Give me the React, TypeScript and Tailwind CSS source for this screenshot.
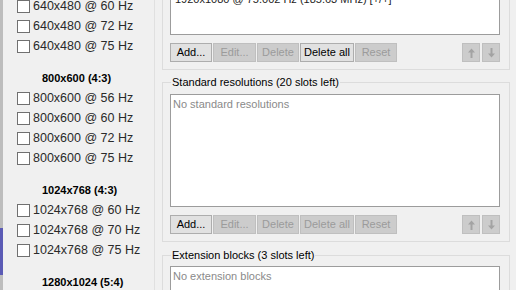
const modes = [
  { title: null, items: ["640x480 @ 60 Hz", "640x480 @ 72 Hz", "640x480 @ 75 Hz"] },
  { title: "800x600 (4:3)", items: ["800x600 @ 56 Hz", "800x600 @ 60 Hz", "800x600 @ 72 Hz", "800x600 @ 75 Hz"] },
  { title: "1024x768 (4:3)", items: ["1024x768 @ 60 Hz", "1024x768 @ 70 Hz", "1024x768 @ 75 Hz"] },
  { title: "1280x1024 (5:4)", items: [] },
]

function Btn({ label, enabled, w }: { label: string; enabled?: boolean; w: string }) {
  return (
    <div
      className={`${w} h-[19px] border flex items-center justify-center text-[11px] leading-none ${
        enabled ? "bg-[#e1e1e1] border-[#adadad] text-black" : "bg-[#cccccc] border-[#bfbfbf] text-[#9b9b9b]"
      }`}
    >
      {label}
    </div>
  )
}

function Arrow({ up }: { up?: boolean }) {
  return (
    <div className="w-[18px] h-[19px] border bg-[#cccccc] border-[#bfbfbf] flex items-center justify-center">
      <svg width="7" height="10" viewBox="0 0 7 10" className={up ? "" : "rotate-180"}>
        <path d="M3.5 0.5 L7 4.5 L4.5 4.5 L4.5 10 L2.5 10 L2.5 4.5 L0 4.5 Z" fill="#a3a3a3" />
      </svg>
    </div>
  )
}

function ButtonRow({ hasItems }: { hasItems?: boolean }) {
  return (
    <div className="flex items-center gap-[1px] mt-[8px]">
      <Btn label="Add..." enabled w="w-[42px]" />
      <Btn label="Edit..." w="w-[43px]" />
      <Btn label="Delete" w="w-[42px]" />
      <Btn label="Delete all" enabled={hasItems} w="w-[54px]" />
      <Btn label="Reset" w="w-[42px]" />
      <div className="ml-auto flex gap-[2px]">
        <Arrow up />
        <Arrow />
      </div>
    </div>
  )
}

function GroupBox({ title, children, className }: { title: string; children: React.ReactNode; className?: string }) {
  return (
    <div className={`relative border border-[#dcdcdc] pl-[7px] pr-[9px] ${className ?? ""}`}>
      <span className="absolute -top-[8px] left-[8px] bg-[#f0f0f0] px-[1px] text-[11px] leading-[14px] text-black whitespace-nowrap">
        {title}
      </span>
      {children}
    </div>
  )
}

export default function App() {
  return (
    <div className="w-[516px] h-[290px] overflow-hidden bg-[#f0f0f0] flex" style={{ fontFamily: '"Liberation Sans", Arial, sans-serif' }}>
      <div className="w-[3px] flex flex-col">
        <div className="h-[228px] bg-[#bdbdbd]" />
        <div className="h-[47px] bg-[#5b5bb5]" />
        <div className="flex-1 bg-[#bdbdbd]" />
      </div>

      <div className="w-[152px] border-r border-[#e0e0e0] overflow-hidden">
        <div className="-mt-[4px]">
          {modes.map((g, i) => (
            <div key={i}>
              {g.title && (
                <div className="mt-[12px] h-[20px] flex items-center pl-[39px] text-[11px] font-bold text-black whitespace-nowrap">
                  {g.title}
                </div>
              )}
              {g.items.map((m) => (
                <div key={m} className="h-[20px] flex items-center pl-[14px] whitespace-nowrap">
                  <div className="w-[13px] h-[13px] border border-[#707070] bg-white shrink-0" />
                  <span className="ml-[3px] text-[12.5px] text-[#2a2a2a]">{m}</span>
                </div>
              ))}
            </div>
          ))}
        </div>
      </div>

      <div className="flex-1 pl-[7px] pr-[6px] overflow-hidden">
        <div className="border-x border-b border-[#dcdcdc] pl-[7px] pr-[9px] pb-[7px]">
          <div className="h-[35px] border-x border-b border-[#9c9c9c] bg-white overflow-hidden">
            <div className="-mt-[8px] pl-[4px] text-[11px] leading-[14px] text-[#222] whitespace-nowrap">
              1920x1080 @ 75.002 Hz (185.63 MHz) [+/+]
            </div>
          </div>
          <ButtonRow hasItems />
        </div>

        <GroupBox title="Standard resolutions (20 slots left)" className="mt-[12px] pt-[11px] pb-[7px]">
          <div className="h-[113px] border border-[#9c9c9c] bg-white">
            <div className="pl-[2px] pt-[2px] text-[11px] leading-[14px] text-[#8a8a8a]">No standard resolutions</div>
          </div>
          <ButtonRow />
        </GroupBox>

        <GroupBox title="Extension blocks (3 slots left)" className="mt-[13px] pt-[10px] h-[60px]">
          <div className="h-[60px] border border-[#9c9c9c] bg-white">
            <div className="pl-[2px] pt-[2px] text-[11px] leading-[14px] text-[#8a8a8a]">No extension blocks</div>
          </div>
        </GroupBox>
      </div>
    </div>
  )
}
